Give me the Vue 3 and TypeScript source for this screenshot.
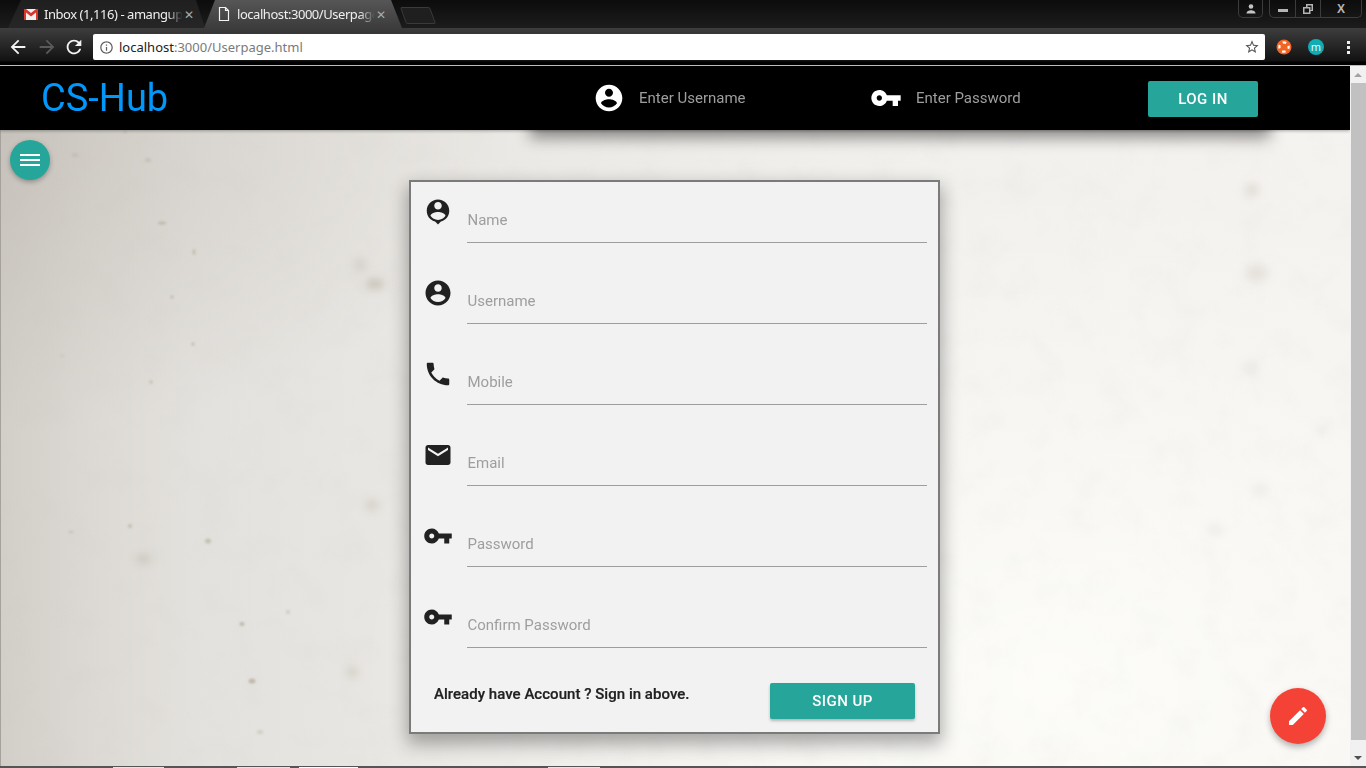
<template>
  <div class="screen">
    <!-- browser tab strip -->
    <div class="tabstrip">
      <div class="tab">
        <svg class="tab-icon" viewBox="0 0 16 16">
          <rect x="1" y="3" width="14" height="11" fill="#f1f1f1" />
          <path d="M1 3h2l5 4 5-4h2v11h-2V6.5L8 10.500 3 6.500V14H1z" fill="#d7372c" />
        </svg>
        <span class="tab-title">Inbox (1,116) - amangup</span>
        <span class="tab-close">✕</span>
      </div>
      <div class="tab active">
        <svg class="tab-icon" viewBox="0 0 16 16">
          <path d="M3.500 1.500h6l3 3v10h-9z M9.500 1.500v3h3" fill="none" stroke="#f2f2f2" stroke-width="1.200" />
        </svg>
        <span class="tab-title">localhost:3000/Userpage</span>
        <span class="tab-close">✕</span>
      </div>
      <div class="newtab"></div>
      <div class="window-controls">
        <div class="win-user">
          <svg viewBox="0 0 12 12" width="12" height="12">
            <circle cx="6" cy="3.500" r="2.300" fill="#c4c4c4" />
            <path d="M1.500 10.500c0-2.500 2.500-3.300 4.500-3.300s4.500.8 4.500 3.300z" fill="#c4c4c4" />
          </svg>
        </div>
        <div class="win-group">
          <div class="win-btn min"><i></i></div>
          <div class="win-btn max">
            <svg viewBox="0 0 12 12" width="12" height="12">
              <path d="M4 1h7v7H8.500V11H1V4h3zM5.500 2.500V4h3v3H9.500V2.500zM2.500 5.500v4h4.500v-4z" fill="#b5b5b5" fill-rule="evenodd" />
            </svg>
          </div>
          <div class="win-btn close">X</div>
        </div>
      </div>
    </div>

    <!-- browser toolbar -->
    <div class="toolbar">
      <svg class="nav-icon" viewBox="0 0 24 24"><path fill="#f4f4f4" d="M20 11H7.830l5.590-5.590L12 4l-8 8 8 8 1.410-1.410L7.830 13H20v-2z" /></svg>
      <svg class="nav-icon" viewBox="0 0 24 24"><path fill="#5a5a5a" d="M12 4l-1.410 1.410L16.170 11H4v2h12.170l-5.580 5.590L12 20l8-8z" /></svg>
      <svg class="nav-icon reload" viewBox="0 0 24 24"><path fill="#f4f4f4" d="M17.650 6.350C16.200 4.900 14.210 4 12 4c-4.420 0-7.990 3.580-7.990 8s3.570 8 7.990 8c3.730 0 6.840-2.550 7.730-6h-2.080c-.82 2.330-3.040 4-5.650 4-3.310 0-6-2.690-6-6s2.690-6 6-6c1.660 0 3.140.69 4.220 1.780L13 11h7V4l-2.350 2.350z" /></svg>
      <div class="omnibox">
        <svg class="info" viewBox="0 0 24 24"><path fill="#5f5f5f" d="M11 7h2v2h-2zm0 4h2v6h-2zm1-9C6.480 2 2 6.480 2 12s4.480 10 10 10 10-4.480 10-10S17.520 2 12 2zm0 18c-4.410 0-8-3.590-8-8s3.590-8 8-8 8 3.590 8 8-3.590 8-8 8z" /></svg>
        <span class="url"><b>localhost</b>:3000/Userpage.html</span>
        <svg class="star" viewBox="0 0 24 24"><path fill="#555" d="M22 9.240l-7.190-.62L12 2 9.190 8.630 2 9.240l5.460 4.730L5.820 21 12 17.270 18.180 21l-1.630-7.030L22 9.240zM12 15.400l-3.760 2.270 1-4.280-3.320-2.880 4.380-.38L12 6.100l1.710 4.040 4.380.38-3.320 2.880 1 4.280L12 15.400z" /></svg>
      </div>
      <div class="ext-icons">
        <svg class="ext" viewBox="0 0 16 16">
          <circle cx="8" cy="8" r="7.500" fill="#f26522" />
          <circle cx="8" cy="8" r="4.600" fill="none" stroke="#fff" stroke-width="2.200" stroke-dasharray="3.600 3.600" stroke-dashoffset="1.800" />
        </svg>
        <div class="ext-m">m</div>
        <div class="dots"><i></i><i></i><i></i></div>
      </div>
    </div>

    <div class="viewport">
      <div class="page">
        <svg class="paper" width="100%" height="100%">
          <filter id="paper-noise">
            <feTurbulence type="fractalNoise" baseFrequency="0.03" numOctaves="4" seed="8" />
            <feColorMatrix values="0 0 0 0 0.5  0 0 0 0 0.47  0 0 0 0 0.43  0 0 0 -2.200 1.120" />
          </filter>
          <filter id="speck-blur"><feGaussianBlur stdDeviation="1" /></filter>
          <filter id="blotch-blur"><feGaussianBlur stdDeviation="4" /></filter>
          <rect width="100%" height="100%" filter="url(#paper-noise)" opacity="0.06" />
          <g filter="url(#speck-blur)" fill="#a89f8c">
            <ellipse
              v-for="(s, i) in specks"
              :key="i"
              :cx="s[0]"
              :cy="s[1] - 66"
              :rx="s[2]"
              :ry="s[3]"
              :opacity="s[4]"
            />
          </g>
          <g filter="url(#blotch-blur)" fill="#a89f8c">
            <ellipse
              v-for="(s, i) in blotches"
              :key="i"
              :cx="s[0]"
              :cy="s[1] - 66"
              :rx="s[2]"
              :ry="s[3]"
              :opacity="s[4]"
            />
          </g>
        </svg>

        <header class="topbar">
          <div class="logo">CS-Hub</div>
          <form class="login" @submit.prevent>
            <div class="login-field">
              <svg class="login-icon" viewBox="0 0 24 24"><path :d="icons.account" /></svg>
              <label class="login-label" for="login-user">Enter Username</label>
              <input id="login-user" class="login-input" type="text" />
            </div>
            <div class="login-field">
              <svg class="login-icon" viewBox="0 0 24 24"><path :d="icons.key" /></svg>
              <label class="login-label" for="login-pass">Enter Password</label>
              <input id="login-pass" class="login-input" type="password" />
            </div>
            <button class="btn login-btn" type="submit">LOG IN</button>
          </form>
        </header>

        <main class="content">
          <form class="card" @submit.prevent>
            <div v-for="field in fields" :key="field.id" class="row">
              <svg class="row-icon" viewBox="0 0 24 24"><path :d="field.icon" /></svg>
              <div class="input-field">
                <input :id="field.id" class="row-input" :type="field.type" />
                <label class="row-label" :for="field.id">{{ field.label }}</label>
              </div>
            </div>
            <div class="card-foot">
              <span class="foot-text">Already have Account ? Sign in above.</span>
              <button class="btn signup-btn" type="submit">SIGN UP</button>
            </div>
          </form>
        </main>

        <button class="menu-btn" type="button" aria-label="menu"><i></i><i></i><i></i></button>
        <button class="fab" type="button" aria-label="edit">
          <svg viewBox="0 0 24 24" width="24" height="24"><path fill="#fff" d="M3 17.250V21h3.750L17.810 9.940l-3.750-3.750L3 17.250zM20.710 7.040c.39-.39.39-1.020 0-1.410l-2.340-2.340c-.39-.39-1.020-.39-1.410 0l-1.830 1.830 3.750 3.750 1.830-1.830z" /></svg>
        </button>
      </div>

      <div class="scrollbar">
        <span class="arrow up"></span>
        <div class="track"><div class="thumb"></div></div>
        <span class="arrow down"></span>
      </div>
    </div>
    <div class="bottom-edge"></div>
  </div>
</template>

<script setup lang="ts">
const icons = {
  account:
    'M12 2C6.480 2 2 6.480 2 12s4.480 10 10 10 10-4.480 10-10S17.520 2 12 2zm0 3c1.660 0 3 1.340 3 3s-1.340 3-3 3-3-1.340-3-3 1.340-3 3-3zm0 14.200c-2.500 0-4.710-1.280-6-3.220.03-1.990 4-3.080 6-3.080 1.990 0 5.970 1.090 6 3.080-1.290 1.940-3.500 3.220-6 3.220z',
  pin: 'M12 2c-4.970 0-9 4.030-9 9 0 4.170 2.840 7.670 6.690 8.690L12 22l2.310-2.310C18.160 18.670 21 15.170 21 11c0-4.970-4.030-9-9-9zm0 2c1.660 0 3 1.340 3 3s-1.340 3-3 3-3-1.340-3-3 1.340-3 3-3zm0 14.300c-2.500 0-4.710-1.280-6-3.220.03-1.990 4-3.080 6-3.080 1.990 0 5.970 1.090 6 3.080-1.290 1.940-3.500 3.220-6 3.220z',
  phone:
    'M6.620 10.790c1.440 2.830 3.760 5.140 6.590 6.590l2.200-2.200c.27-.27.67-.36 1.020-.24 1.120.37 2.330.57 3.570.57.55 0 1 .45 1 1V20c0 .55-.45 1-1 1-9.390 0-17-7.610-17-17 0-.55.45-1 1-1h3.500c.55 0 1 .45 1 1 0 1.250.2 2.450.57 3.570.11.350.03.740-.25 1.020l-2.200 2.200z',
  email:
    'M20 4H4c-1.100 0-1.990.9-1.990 2L2 18c0 1.100.9 2 2 2h16c1.100 0 2-.9 2-2V6c0-1.100-.9-2-2-2zm0 4l-8 5-8-5V6l8 5 8-5v2z',
  key: 'M12.650 10C11.830 7.670 9.610 6 7 6c-3.310 0-6 2.690-6 6s2.690 6 6 6c2.610 0 4.830-1.670 5.650-4H17v4h4v-4h2v-4H12.650zM7 14c-1.100 0-2-.9-2-2s.9-2 2-2 2 .9 2 2-.9 2-2 2z',
}

const fields = [
  { id: 'name', label: 'Name', type: 'text', icon: icons.pin },
  { id: 'username', label: 'Username', type: 'text', icon: icons.account },
  { id: 'mobile', label: 'Mobile', type: 'tel', icon: icons.phone },
  { id: 'email', label: 'Email', type: 'email', icon: icons.email },
  { id: 'password', label: 'Password', type: 'password', icon: icons.key },
  { id: 'confirm', label: 'Confirm Password', type: 'password', icon: icons.key },
]

// marks in the paper: x, y, rx, ry, opacity
const specks = [
  [162, 223, 4, 1.5, 0.5], [194, 252, 1.5, 3, 0.45], [148, 160, 3, 2, 0.3], [172, 297, 1.5, 1.5, 0.6],
  [193, 344, 1.5, 1.5, 0.6], [151, 382, 1.5, 2, 0.45], [130, 526, 2, 2, 0.5], [208, 541, 3, 2.5, 0.5],
  [71, 532, 2.5, 1, 0.45], [242, 624, 2.5, 2, 0.6], [288, 612, 2, 2, 0.35], [252, 681, 3.5, 2.5, 0.6],
  [260, 732, 3, 2, 0.3], [62, 356, 2, 1, 0.3], [125, 132, 2, 1, 0.4], [75, 155, 3, 2, 0.25],
]

const blotches = [
  [375, 284, 9, 5, 0.5], [360, 265, 7, 7, 0.25], [143, 559, 7, 4, 0.4], [372, 505, 7, 6, 0.3], [352, 672, 6, 6, 0.3],
  [1252, 190, 7, 7, 0.25], [1257, 273, 11, 9, 0.2], [1250, 368, 9, 8, 0.1], [1322, 430, 7, 5, 0.1],
  [1260, 490, 9, 7, 0.1], [1215, 530, 9, 7, 0.1],
]
</script>

<style>
html,
body {
  margin: 0;
  height: 100%;
  overflow: hidden;
}
</style>

<style scoped>
.screen {
  height: 768px;
  display: flex;
  flex-direction: column;
  font-family: Roboto, sans-serif;
  background: #000;
}

/* browser chrome */
.tabstrip {
  height: 28px;
  flex: none;
  display: flex;
  padding-left: 8px;
  background: linear-gradient(#0c0c0c, #1c1c1c);
  position: relative;
}
.tab {
  width: 197px;
  height: 28px;
  padding: 0 11px 0 15px;
  box-sizing: border-box;
  display: flex;
  align-items: center;
  color: #efefef;
  font: 13px 'Noto Sans', sans-serif;
  background: linear-gradient(#1f1f1f, #262626);
  clip-path: polygon(0 100%, 13px 0, 188px 0, 197px 100%);
}
.tab.active {
  width: 198px;
  margin-left: -1px;
  padding: 0 16px 0 12px;
  background: linear-gradient(#565656, #3c3c3c);
  clip-path: polygon(0 100%, 11px 0, 187px 0, 198px 100%);
}
.tab-icon {
  width: 16px;
  height: 16px;
  flex: none;
  margin-right: 5px;
}
.tab-title {
  flex: 1;
  min-width: 0;
  white-space: nowrap;
  letter-spacing: -0.45px;
  -webkit-mask-image: linear-gradient(to right, #000 88%, transparent 99%);
  mask-image: linear-gradient(to right, #000 88%, transparent 99%);
}
.tab-close {
  color: #aaa;
  font-size: 12px;
}
.newtab {
  width: 28px;
  height: 15px;
  margin: 7px 0 0 1px;
  transform: skewX(20deg);
  background: #1f1f1f;
  border: 1px solid #3a3a3a;
  border-radius: 2px;
}
.window-controls {
  position: absolute;
  top: 0;
  right: 4px;
  display: flex;
  gap: 6px;
}
.win-user,
.win-group {
  height: 17px;
  border: 1px solid #3c3c3c;
  border-top: 0;
  border-radius: 0 0 5px 5px;
  display: flex;
  align-items: center;
  justify-content: center;
}
.win-user {
  width: 23px;
}
.win-group {
  width: 91px;
}
.win-btn {
  height: 100%;
  display: flex;
  align-items: center;
  justify-content: center;
  border-right: 1px solid #3c3c3c;
}
.win-btn.min {
  width: 25px;
}
.win-btn.min i {
  width: 10px;
  height: 3px;
  margin-top: 4px;
  background: #b5b5b5;
}
.win-btn.max {
  width: 24px;
}
.win-btn.close {
  flex: 1;
  border-right: 0;
  color: #b5b5b5;
  font: 700 12px 'Liberation Sans', sans-serif;
}
.toolbar {
  height: 38px;
  flex: none;
  display: flex;
  align-items: flex-start;
  box-sizing: border-box;
  padding: 6px 0 0 6px;
  background: linear-gradient(#3d3d3d 0, #262626 18px, #111 33px, #000 34px);
  border-bottom: 1px solid #bdbdbd;
}
.nav-icon {
  width: 22px;
  height: 22px;
  margin: 2px 1px 0 1px;
}
.nav-icon + .nav-icon {
  margin-left: 6px;
}
.nav-icon.reload {
  margin-left: 4px;
}
.omnibox {
  width: 1172px;
  height: 26px;
  margin-left: 7px;
  box-sizing: border-box;
  padding: 0 5px 0 6px;
  display: flex;
  align-items: center;
  background: #fff;
  border-radius: 2px;
}
.info {
  width: 15px;
  height: 15px;
  margin-right: 5px;
}
.url {
  flex: 1;
  color: #7a7a7a;
  font: 13px 'Noto Sans', sans-serif;
}
.url b {
  color: #222;
  font-weight: 400;
}
.star {
  width: 16px;
  height: 16px;
}
.ext-icons {
  display: flex;
  align-items: center;
  height: 26px;
  margin-left: 11px;
}
.ext {
  width: 16px;
  height: 16px;
}
.ext-m {
  width: 16px;
  height: 16px;
  margin-left: 16px;
  border-radius: 50%;
  background: #10adb5;
  color: #dff;
  font: 11px/15px 'Noto Sans', sans-serif;
  text-align: center;
}
.dots {
  margin-left: 23px;
  display: flex;
  flex-direction: column;
  gap: 2px;
}
.dots i {
  width: 3px;
  height: 3px;
  background: #eee;
}

/* page */
.viewport {
  height: 700px;
  flex: none;
  display: flex;
}
.page {
  flex: 1;
  position: relative;
  overflow: hidden;
  background:
    linear-gradient(90deg, #a5a29d 1px, transparent 1px),
    radial-gradient(ellipse 520px 300px at 0 64px, rgba(170, 162, 152, 0.3), transparent),
    radial-gradient(ellipse 700px 500px at 78% 88%, rgba(255, 255, 252, 0.8), transparent),
    linear-gradient(90deg, #d2cfc9 0, #dcd9d4 90px, #e3e1dd 190px, #e9e7e3 400px, #f2f0ed 900px, #f5f3f0 100%);
}
.paper {
  position: absolute;
  inset: 0;
}
.topbar {
  height: 64px;
  display: flex;
  position: relative;
  background: #000;
  box-shadow: 0 1px 3px rgba(0, 0, 0, 0.3);
}
.logo {
  margin-left: 41px;
  color: #0098fb;
  font-size: 38px;
  line-height: 64px;
}
.login {
  margin-left: auto;
  margin-right: 80px;
  width: 740px;
  box-sizing: border-box;
  padding-left: 63px;
  display: flex;
  align-items: center;
  box-shadow: 0 8px 14px 0 rgba(0, 0, 0, 0.42);
  background: #000;
}
.login-field {
  width: 278px;
  position: relative;
  display: flex;
  align-items: center;
  gap: 14px;
}
.login-field:first-child {
  width: 277px;
}
.login-icon {
  width: 32px;
  height: 32px;
  fill: #fff;
}
.login-label {
  color: #9e9e9e;
  font-size: 15px;
}
.login-input {
  position: absolute;
  left: 46px;
  top: 0;
  width: 200px;
  height: 100%;
  padding: 0;
  border: 0;
  outline: 0;
  background: transparent;
}
.btn {
  border: 0;
  border-radius: 2px;
  background: #26a69a;
  color: #fff;
  font-family: Roboto, sans-serif;
  font-size: 15px;
  font-weight: 500;
  height: 36px;
  padding: 0;
  letter-spacing: 0.45px;
}
.login-btn {
  width: 110px;
  margin-top: 2px;
}
.content {
  position: relative;
  display: flex;
  justify-content: center;
  padding: 50px 1px 0 0;
}
.card {
  width: 531px;
  height: 554px;
  box-sizing: border-box;
  border: 2px solid #7b7b7b;
  background: #f2f2f2;
  box-shadow: 0 8px 17px 2px rgba(0, 0, 0, 0.32);
}
.row {
  height: 61px;
  margin-bottom: 20px;
  padding: 15px 11px 0 12px;
  box-sizing: border-box;
  display: flex;
  align-items: flex-start;
}
.row-icon {
  width: 30px;
  height: 30px;
  flex: none;
  margin-right: 14px;
  fill: #212121;
}
.input-field {
  flex: 1;
  position: relative;
  height: 46px;
}
.row-input {
  display: block;
  width: 100%;
  height: 46px;
  box-sizing: border-box;
  padding: 0;
  border: 0;
  border-bottom: 1px solid #9e9e9e;
  outline: 0;
  background: transparent;
}
.row-label {
  position: absolute;
  left: 0.5px;
  top: 14px;
  color: #9e9e9e;
  font-size: 15px;
  line-height: 18px;
}
.card-foot {
  display: flex;
  justify-content: space-between;
  align-items: flex-start;
  padding: 15px 23px 0;
}
.foot-text {
  margin-top: 2px;
  color: #212121;
  font-size: 15px;
  font-weight: 500;
  line-height: 18px;
  letter-spacing: 0.03px;
  -webkit-text-stroke: 0.2px #212121;
}
.signup-btn {
  width: 145px;
  box-shadow: 0 2px 3px rgba(0, 0, 0, 0.25);
}
.menu-btn {
  position: absolute;
  left: 10px;
  top: 74px;
  width: 40px;
  height: 40px;
  padding: 0;
  border: 0;
  border-radius: 50%;
  background: #26a69a;
  display: flex;
  flex-direction: column;
  align-items: center;
  justify-content: center;
  gap: 3px;
  box-shadow: 0 2px 5px rgba(0, 0, 0, 0.3);
}
.menu-btn i {
  width: 20px;
  height: 2px;
  background: #fff;
  display: block;
}
.fab {
  position: absolute;
  left: 1270px;
  top: 622px;
  width: 56px;
  height: 56px;
  padding: 0;
  border: 0;
  border-radius: 50%;
  background: #f44336;
  display: flex;
  align-items: center;
  justify-content: center;
  box-shadow: 0 3px 6px rgba(0, 0, 0, 0.3);
}

/* scrollbar */
.scrollbar {
  width: 16px;
  flex: none;
  display: flex;
  flex-direction: column;
  background: #f1f1f1;
}
.arrow {
  height: 17px;
  flex: none;
  display: flex;
  align-items: center;
  justify-content: center;
}
.arrow::before {
  content: '';
  border-left: 4px solid transparent;
  border-right: 4px solid transparent;
}
.arrow.up::before {
  border-bottom: 4px solid #a3a3a3;
}
.arrow.down::before {
  border-top: 4px solid #505050;
}
.track {
  flex: 1;
}
.thumb {
  height: 657px;
  margin-left: 1px;
  background: #c1c1c1;
}
.bottom-edge {
  flex: 1;
  background:
    linear-gradient(#e4e4e4, #e4e4e4) 113px 1px / 51px 1px no-repeat,
    linear-gradient(#e4e4e4, #e4e4e4) 237px 1px / 53px 1px no-repeat,
    linear-gradient(#fff, #fff) 299px 1px / 59px 1px no-repeat,
    linear-gradient(#e4e4e4, #e4e4e4) 548px 1px / 52px 1px no-repeat,
    #555;
}
</style>
